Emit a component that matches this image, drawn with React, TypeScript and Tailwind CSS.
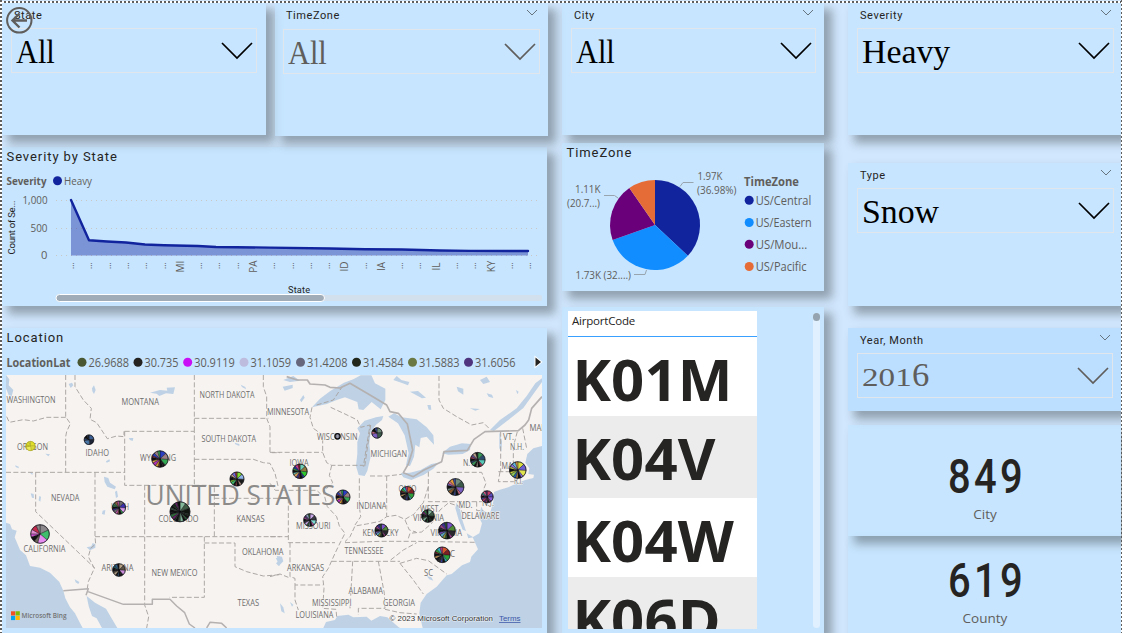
import React from "react";

const DIN = "font-['Roboto','Liberation_Sans',sans-serif]";
const SEGOE = "font-['Open_Sans','Noto_Sans',sans-serif]";
const SERIF = "font-['Liberation_Serif',serif]";
const SHADOW = "shadow-[7px_7px_9px_1px_rgba(75,85,92,0.48)]";
const PANEL = `bg-[rgba(192,228,255,0.62)] ${SHADOW}`;

function Chevron({ className = "" }: { className?: string }) {
  return (
    <svg viewBox="0 0 32 18" className={className} fill="none" stroke="currentColor">
      <path d="M1 1L16 16L31 1" strokeWidth="1.7" />
    </svg>
  );
}

function SmallChevron() {
  return (
    <svg viewBox="0 0 12 8" className="h-2 w-3" fill="none" stroke="#66757f">
      <path d="M1 1L6 6L11 1" strokeWidth="1" />
    </svg>
  );
}

type SlicerProps = {
  title: string;
  size: string;
  pad: string;
  surface?: string;
  arrow?: boolean;
  muted?: boolean;
  children: React.ReactNode;
};

function Slicer({ title, size, pad, surface = PANEL, arrow = true, muted = false, children }: SlicerProps) {
  return (
    <section className={`shrink-0 ${surface} ${size} ${pad}`}>
      <div className="flex h-[18px] justify-between pr-0.5">
        <h2 className={`${DIN} pt-px pl-[3px] text-[11px] leading-[18px] tracking-[0.55px] text-[#252423]`}>{title}</h2>
        <div className="pt-[3px]">{arrow && <SmallChevron />}</div>
      </div>
      <div
        className={`mt-1 flex h-[45px] items-center justify-between border border-[#e0e6ec] pr-[3.5px] pl-[4px] ${muted ? "text-[#605e5c]" : "text-black"}`}
      >
        <div className={`${SERIF} text-[34.5px] leading-[42px] whitespace-nowrap`}>{children}</div>
        <Chevron className="h-[18px] w-8" />
      </div>
    </section>
  );
}

const severity = [
  [71, 200], [89, 240.3], [107, 241.5], [126, 242.5], [145, 244.5], [164, 245.3],
  [198, 246], [216, 247], [270, 247.6], [330, 248.5], [365, 249.2], [402, 249.5],
  [440, 250.5], [470, 250.9], [528, 251],
];
const stateTicks: [number, string][] = [
  [73, "…"], [91, "…"], [110, "…"], [128, "…"], [146, "…"], [165, "…"], [181, "MI"],
  [201, "…"], [219, "…"], [238, "…"], [254, "PA"], [274, "…"], [293, "…"], [311, "…"],
  [329, "…"], [345, "ID"], [366, "…"], [382, "IA"], [402, "…"], [420, "…"], [437, "IL"],
  [457, "…"], [475, "…"], [492, "KY"], [512, "…"], [530, "…"],
];

function SeverityChart() {
  const line = severity.map((p) => p.join(",")).join(" ");
  return (
    <svg viewBox="2 172 545 134" className={`block h-[134px] w-[545px] ${SEGOE}`}>
      <text x="6.5" y="185" fontSize="11.2" fontWeight="700" fill="#605e5c" textLength="40" lengthAdjust="spacingAndGlyphs">Severity</text>
      <circle cx="57.5" cy="180.7" r="4.5" fill="#12239e" />
      <text x="64" y="185" fontSize="11.5" fill="#605e5c" textLength="28" lengthAdjust="spacingAndGlyphs">Heavy</text>
      <g stroke="#c9c8c6" strokeWidth="1" strokeDasharray="1 4">
        <path d="M56 200.5H541M56 228.5H541M56 255.5H541" />
      </g>
      <g fontSize="11.2" fill="#605e5c" textAnchor="end">
        <text x="47.5" y="204" textLength="25" lengthAdjust="spacingAndGlyphs">1,000</text>
        <text x="47.5" y="232" textLength="17" lengthAdjust="spacingAndGlyphs">500</text>
        <text x="47.5" y="259">0</text>
      </g>
      <text transform="translate(14.5 254.5) rotate(-90)" className={DIN} fontSize="9.6" fill="#252423" textLength="54" lengthAdjust="spacing">Count of Se...</text>
      <polygon points={`71,255.5 ${line} 528,255.5`} fill="#12239e" fillOpacity="0.42" />
      <polyline points={line} fill="none" stroke="#12239e" strokeWidth="2.4" strokeLinejoin="round" strokeLinecap="round" />
      {stateTicks.map(([x, label]) =>
        label === "…" ? (
          <text key={x} transform={`translate(${x + 1} 269) rotate(-90)`} fontSize="8.5" fill="#504e4c" textLength="6">…</text>
        ) : (
          <text key={x} transform={`translate(${x + 3} 266.5) rotate(-90)`} fontSize="10" fill="#605e5c" textAnchor="middle">{label}</text>
        ),
      )}
      <text x="288" y="293" className={DIN} fontSize="9.2" fill="#252423" textLength="22" lengthAdjust="spacing">State</text>
      <rect x="56" y="295" width="486" height="6" rx="2" fill="#d2e0ee" />
      <rect x="56" y="294.5" width="268.5" height="7" rx="3.5" fill="#a0adb8" stroke="#fff" strokeWidth="1" />
    </svg>
  );
}

function polar(cx: number, cy: number, r: number, turn: number) {
  const a = turn * Math.PI * 2 - Math.PI / 2;
  return `${(cx + r * Math.cos(a)).toFixed(2)} ${(cy + r * Math.sin(a)).toFixed(2)}`;
}
function wedge(cx: number, cy: number, r: number, from: number, to: number) {
  return `M${cx} ${cy}L${polar(cx, cy, r, from)}A${r} ${r} 0 ${to - from > 0.5 ? 1 : 0} 1 ${polar(cx, cy, r, to)}Z`;
}

function ZoneChart() {
  const legend: [string, string, number, number][] = [
    ["US/Central", "#12239e", 200.3, 55.5],
    ["US/Eastern", "#118dff", 222.5, 56],
    ["US/Mou...", "#6b007b", 244.3, 51.5],
    ["US/Pacific", "#e66c37", 266.5, 51],
  ];
  return (
    <svg viewBox="562 163 262 128" className={`block h-[128px] w-[262px] ${SEGOE}`} fill="#605e5c">
      <path d={wedge(655, 225, 45, 0, 0.3698)} fill="#12239e" />
      <path d={wedge(655, 225, 45, 0.3698, 0.6955)} fill="#118dff" />
      <path d={wedge(655, 225, 45, 0.6955, 0.9035)} fill="#6b007b" />
      <path d={wedge(655, 225, 45, 0.9035, 1)} fill="#e66c37" />
      <g fill="none" stroke="#98a4ae" strokeWidth="1">
        <path d="M680 186.5L683 182.5H693.5M604 195.5H614.5L618 198M634 274.5H645L646.5 270" />
      </g>
      <g fontSize="10.6">
        <text x="697.5" y="180" textLength="25" lengthAdjust="spacingAndGlyphs">1.97K</text>
        <text x="697" y="194" textLength="39.5" lengthAdjust="spacingAndGlyphs">(36.98%)</text>
        <text x="575" y="193" textLength="25.5" lengthAdjust="spacingAndGlyphs">1.11K</text>
        <text x="567" y="207" textLength="33" lengthAdjust="spacingAndGlyphs">(20.7...)</text>
        <text x="575.5" y="279" textLength="55.5" lengthAdjust="spacingAndGlyphs">1.73K (32....)</text>
      </g>
      <text x="744" y="186" fontSize="11.5" fontWeight="700" textLength="55" lengthAdjust="spacingAndGlyphs">TimeZone</text>
      {legend.map(([name, color, y, w]) => (
        <g key={name}>
          <circle cx="749.2" cy={y} r="4.5" fill={color} />
          <text x="755.7" y={y + 4.7} fontSize="12" textLength={w} lengthAdjust="spacingAndGlyphs">{name}</text>
        </g>
      ))}
    </svg>
  );
}

const bubblePalettes: Record<string, string[]> = {
  yellow: ["#e0e02a", "#d8d83c", "#ecea55", "#c8c420"],
  blue: ["#3c5f93", "#1a2233", "#4c78a8", "#27406b"],
  gray: ["#7d7f92"],
  green: ["#83b89a", "#3d5b45", "#101510", "#1b2a1e", "#6b1f6b", "#2e6b3b", "#111111"],
  bright: ["#8b878a", "#3fbf6d", "#e68cf0", "#6e665a", "#8d6a3a", "#d658d6", "#e08ad0", "#c22b4d"],
  mixed: ["#2c3ec0", "#9b7f86", "#34a853", "#1a1a1a", "#40b8cc", "#6b2d1c", "#d39a32", "#b02fb5", "#e3a84a", "#d9a25d", "#7a1f2b"],
  utah: ["#6d6a6e", "#3a2fb0", "#d89ae8", "#33a852", "#3c7a52", "#8d5a3a", "#d658b6"],
  purple: ["#7a52c9", "#4f8a34", "#28282e", "#9b3f8d", "#3a2f90", "#27522d", "#8d9638", "#5aa0b8"],
  lime: ["#7fd92c", "#8fb5e8", "#1a1a1a", "#caa08b", "#7768e8", "#a13838", "#101010", "#3fbf6d"],
  sand: ["#b5a083", "#5c5145", "#c98ad8", "#161616", "#1f5f6b", "#2a5d8a", "#101010"],
  warm: ["#d2562c", "#7c1f25", "#2ea03a", "#33b0bd", "#c3318f", "#4447c0", "#2c2c2c", "#161616", "#d9a25d"],
  pastel: ["#d6dd3c", "#6b5fd0", "#e2e44f", "#8d6fe0", "#63b4d8", "#d89a3f", "#1f5fae", "#8ec85a"],
  slate: ["#6f8c7d", "#3c5a4a", "#7a5fc0", "#d36a8a", "#e39a3a", "#3a4fa0", "#161616", "#8a5a2c"],
  teal: ["#3a9a5a", "#2c4c6b", "#57c8b8", "#c23a5a", "#5a4a8a", "#b8a08a", "#101510"],
  berry: ["#c23a6a", "#5a4ab8", "#8a5ad8", "#9b3f8d", "#2aa08a", "#d65a8a", "#4a2f70"],
  iowa: ["#6fd0b8", "#8d7a3c", "#2ec82e", "#1f3f9a", "#c3318f", "#7c1f25", "#3a2f90", "#d9a25d"],
  missouri: ["#c9a8e8", "#3a3a44", "#7fd8d0", "#d658b6", "#4a2f70", "#8a9ab8", "#2f5f34"],
};

const bubbles: [number, number, number, string][] = [
  [30.5, 446, 4.6, "yellow"], [89, 439.7, 4.8, "blue"], [160, 459, 8.2, "mixed"],
  [237, 479, 7, "lime"], [119, 507.6, 6.6, "utah"], [180, 511.8, 10, "green"],
  [40, 534, 9.3, "bright"], [119, 570, 6.3, "sand"], [377, 433, 5.2, "slate"],
  [337.5, 436.2, 2.6, "gray"], [300, 471.3, 7.2, "iowa"], [343, 497, 7, "mixed"],
  [310, 520, 6.3, "missouri"], [381.5, 530.5, 6.5, "purple"], [407.3, 493.3, 6.8, "warm"],
  [428, 516, 6.3, "green"], [447, 530.6, 8.3, "purple"], [442.3, 554.8, 7.8, "warm"],
  [455.5, 487, 8.4, "slate"], [477.8, 459.7, 7.3, "teal"], [517.8, 470, 8.3, "pastel"],
  [487.2, 496.8, 6, "berry"],
];

function Bubble({ x, y, r, palette }: { x: number; y: number; r: number; palette: string }) {
  const colors = bubblePalettes[palette];
  const n = r < 3 ? 2 : r < 5.5 ? 6 : r > 9.5 ? 20 : palette === "bright" ? 9 : 14;
  const weights = Array.from({ length: n }, (_, i) => (i < 3 ? 2.3 : 0.7 + ((i * 7) % 5) * 0.15));
  const total = weights.reduce((a, b) => a + b, 0);
  let at = 0;
  return (
    <g stroke={palette === "yellow" ? "#a8a51c" : "#0d0d12"} strokeWidth={palette === "gray" ? 0 : 0.4}>
      {weights.map((w, i) => {
        const from = at / total;
        at += w;
        const black = i > 2 && i % 5 === 4 && palette !== "yellow";
        return <path key={i} d={wedge(x, y, r, from, at / total)} fill={black ? "#111111" : colors[i % colors.length]} />;
      })}
      <circle cx={x} cy={y} r={r} fill="none" strokeWidth={palette === "gray" ? 1.3 : 0.6} />
    </g>
  );
}

const mapLabels: [string, number, number, number][] = [
  ["WASHINGTON", 6.5, 403, 49], ["MONTANA", 121.5, 404.5, 37.5], ["NORTH DAKOTA", 199.5, 397.5, 55],
  ["MINNESOTA", 267, 415, 42], ["OREGON", 17, 450, 31], ["IDAHO", 85.5, 455.5, 23.5],
  ["WYOMING", 140, 460.5, 36], ["SOUTH DAKOTA", 201.5, 441.5, 54.5], ["WISCONSIN", 317, 439.5, 40.5],
  ["MICHIGAN", 370.5, 457, 36.5], ["NEVADA", 51, 501, 28.5], ["UTAH", 111, 510, 18],
  ["COLORADO", 158.5, 522, 40], ["KANSAS", 236.5, 522, 28], ["CALIFORNIA", 23.5, 551.5, 42],
  ["ARIZONA", 101.5, 571, 32], ["NEW MEXICO", 151.5, 576, 46], ["OKLAHOMA", 242, 555, 41.5],
  ["TEXAS", 237.5, 606, 21.5], ["IOWA", 289.5, 466, 19], ["INDIANA", 356.5, 509, 30],
  ["OHIO", 398.5, 492, 18], ["MISSOURI", 296, 529, 34.5], ["KENTUCKY", 362.5, 536, 36],
  ["TENNESSEE", 344.5, 553.5, 39], ["ARKANSAS", 287, 571, 37], ["ALABAMA", 348.5, 593.5, 34.5],
  ["MISSISSIPPI", 312, 606, 39.5], ["LOUISIANA", 295.5, 618, 38], ["GEORGIA", 383, 606, 32],
  ["SC", 424, 576, 9], ["NC", 444, 557, 11], ["VIRGINIA", 430.5, 536, 31.5],
  ["WEST", 420, 512, 18.5], ["VIRGINIA", 413, 520.5, 31], ["MD.", 458.5, 508, 14],
  ["DELAWARE", 461.5, 518.5, 38], ["N.Y.", 463, 466, 13], ["N.J.", 482, 505.5, 12],
  ["VT.", 503, 439.5, 11], ["N.H.", 510, 449.5, 14], ["MAINE", 529.5, 430.5, 24],
  ["MA", 501.5, 469, 11], ["R.I.", 514, 483.5, 9],
];

function MapView() {
  return (
    <svg viewBox="6 375 536 253" className={`block h-[253px] w-[536px] ${SEGOE}`}>
      <rect x="6" y="375" width="536" height="253" fill="#f6f3f1" />
      <g transform="translate(0 320) scale(.333333)" fill="none" strokeLinejoin="round">
        <g fill="#bed1e5">
          <path d="M18 608L30 612 36 628 50 632 44 652 60 690 78 706 90 738 120 743 150 758 178 786 190 812 196 835 210 862 225 880 238 905 248 924H18Z" />
          <path d="M260 828L285 848 318 866 332 890 352 924H306L290 895 276 888 266 858Z" />
          <path d="M18 165L28 178 26 196 40 210 34 232 26 225 18 205Z" />
          <path d="M312 470L325 474 330 488 348 500 344 508 322 500 314 486Z" />
          <path d="M450 218L480 210 502 212 500 203 525 202 520 222 498 220 478 228 470 221Z" />
          <path d="M206 192l10 -4 4 8 -8 8zM276 205l6 -9 5 14 -5 12 -5-8zM386 354l14 0 -2 9 -8 -3zM92 520l9 2 1 12 -6-1zM118 528l5 2 -2 15 -5-4zM46 436l10 4 0 5 -9-4zM136 401l14 2 -5 6zM88 456l10 2 -1 7zM308 572l8 -2 -2 14 -8-2zM260 682l14 -3 4 -10 8 4 0 10 -16 8zM224 778l14 8 -3 6 -8-5zM318 424l10-6 2 6 -10 4zM722 194l14 7 2 7 -12-7zM704 368l14 4 0 6 -12-5zM828 715l12-6v30l-5-10z" />
          <path d="M345 515l6-3 3 18 -6 4z" />
        </g>
        <g stroke="#aaa5a2" strokeWidth="2.9" strokeDasharray="15 7">
          <path d="M197 165V290L211 311 200 335 197 350V457M20 290L28 307 70 299 100 303 140 292H197" />
          <path d="M18 457H374M107 457V575L285 745M285 457V650L287 672 272 685 265 710 283 745 265 785 262 805M285 650H840" />
          <path d="M225 165V200L250 240 274 265 270 298 290 308 322 356 350 348 372 350V334" />
          <path d="M374 334H583M374 334V496H583V334M583 165V334M583 295H805M583 418H760L790 428 810 430 825 460 835 502" />
          <path d="M790 165L790 200 800 230V295L810 320V398H840M434 496V855L446 890 440 924M583 496H643V650M643 535H840" />
          <path d="M613 650V832H508M613 669H705V740L740 755 790 768 840 764" />
        </g>
        <path d="M190 812L265 806 258 826M262 814L370 853H457V838H510L530 858 554 878 568 912 585 924M620 924L630 907 665 910 680 924" stroke="#b4b1b0" strokeWidth="4.5" />
      </g>
      <g transform="translate(270 320) scale(.333333)" fill="none" strokeLinejoin="round">
        <g fill="#bed1e5">
          <path d="M816 378L790 385 772 402 766 428 778 445 775 462 792 464 790 474 766 480 744 488 715 502 690 509 672 516 670 545 660 580 640 572 634 560 626 590 636 610 628 640 608 652 624 688 604 710 600 726 576 736 545 762 530 766 500 800 470 822 452 848 448 880 458 924H816Z" />
          <path d="M160 924L168 906 195 900 202 888 235 884 250 892 290 890 304 902 330 888 352 892 386 922 390 924Z" />
          <path d="M126 262L150 236 182 212 222 188 250 178 272 166H304L315 190 346 206V240L332 268 305 246 280 270 266 268 262 246 225 232 200 240 170 252Z" />
          <path d="M262 325L284 302 318 292 340 288 336 300 318 314 302 336 298 372 302 410 292 452 284 468 266 465 258 438 262 402 262 366 270 340Z" />
          <path d="M355 290L372 280 395 292 440 298 470 322 490 346 492 374 470 350 452 354 448 382 436 374 432 410 420 438 408 436 416 400 404 346 384 310Z" />
          <path d="M392 460L420 458 452 450 484 432 506 428 490 446 462 464 424 480 400 472ZM516 400L540 380 576 370 602 372 600 390 578 402 535 404Z" />
          <path d="M660 330L690 300 740 265 770 228 796 190 816 175V186L790 222 760 264 710 304 672 333ZM688 335l8 30 -2 30 -6 -10z" />
          <path d="M38 200l30-6 0 10 -24 8zM90 240l10-15 4 8 -10 14zM40 180l30-12 20 14 -30 4zM380 168l14 12 24 6 -4 10 -20-8 -24-8zM420 215l24-2 24 20 -12 2zM560 200l20 6 0 18 -16-10zM630 180l20-10 10 16 -20 6zM650 220l16 4 4 10 -14-4zM600 265l30 2 -14 5zM472 255l10 0 2 14 -8 0zM738 210l8 5 -4 8z" />
          <path d="M560 548l10 20 8 35 10 30 -10-4 -12-30 -10-35zM590 640l20 12 -15 3zM20 708l16 2 4 14 -14 14 -8-8 8-8zM30 850l10 12 4 18 -10-6zM60 846l10 8 -4 6zM470 768l14 4 6 10 -12-4z" />
        </g>
        <g stroke="#aaa5a2" strokeWidth="2.9" strokeDasharray="15 7">
          <path d="M0 397H158M126 262L120 292 130 325 158 345V397L170 428 185 436H280M0 490L16 511H140L152 522M0 650H55" />
          <path d="M185 436L178 466 188 488 160 515 172 560 200 590 208 618 225 640 212 665 195 700 175 745 158 770 162 805 158 865 198 868 200 890" />
          <path d="M268 475V560L272 590 255 615M350 468V590M300 468H350L395 463M475 455V545H640L655 520 640 510 648 490 635 457H500" />
          <path d="M475 500L460 548 432 582 405 598 378 586 350 590 330 604 290 612 255 618 240 650 225 665M55 535V668H195M60 668V770L75 775V795H158M0 770L30 762 55 772M75 795V840L85 870" />
          <path d="M225 668L330 664 440 664 615 667M185 724H390M248 724L240 865M325 724L343 820 345 865H265V885M345 868L390 878 440 882" />
          <path d="M362 720L400 690 440 668M415 655L420 640 455 636 485 610 510 570 540 545M390 730L440 715 475 722 530 762M390 730L430 780 460 822M405 600L418 630 438 636M540 550L570 560 582 592M620 545V572L640 572" />
          <path d="M140 255L190 240 220 195M182 262L225 282 262 300 272 322 300 315 280 440M302 315L284 440" />
          <path d="M507 168V240L520 265 560 290 605 315 640 308 660 328M692 335V455M742 335L730 380V445M758 325L770 385M685 455H750M690 455L685 485H740L745 460" />
        </g>
        <path d="M50 170L82 180 112 180 120 192 165 195 180 202 210 204 240 190 300 225 350 255 360 275 385 280 412 312 428 390 415 432 400 458 430 470 462 450 515 425 522 395 592 391 612 358 645 335 745 332 765 315 776 300 785 265 816 230" stroke="#b4b1b0" strokeWidth="5" />
      </g>
      <text x="145.5" y="505" fontSize="27" fill="#8c8b8a" textLength="190" lengthAdjust="spacingAndGlyphs">UNITED STATES</text>
      <g fontSize="8.3" fill="#6e6c6b" stroke="#f8f6f4" strokeWidth="1.2" paintOrder="stroke">
        {mapLabels.map(([name, x, y, w]) => (
          <text key={`${name}${y}`} x={x} y={y} textLength={w} lengthAdjust="spacingAndGlyphs">{name}</text>
        ))}
      </g>
      {bubbles.map(([x, y, r, palette]) => (
        <Bubble key={`${x}-${y}`} x={x} y={y} r={r} palette={palette} />
      ))}
      <path d="M11 611.3h4.2v4.2H11z" fill="#f25022" />
      <path d="M15.6 611.3h4.2v4.2h-4.2z" fill="#7fba00" />
      <path d="M11 615.9h4.2v4.2H11z" fill="#00a4ef" />
      <path d="M15.6 615.9h4.2v4.2h-4.2z" fill="#ffb900" />
      <text x="21.5" y="618.3" fontSize="7.5" fontWeight="600" fill="#737373" textLength="45" lengthAdjust="spacingAndGlyphs">Microsoft Bing</text>
      <g className="font-['Liberation_Sans',sans-serif]" fontSize="7.6">
        <text x="389.5" y="621" fill="#333" stroke="#fff" strokeWidth="1.2" strokeOpacity=".6" paintOrder="stroke" textLength="103.5" lengthAdjust="spacingAndGlyphs">© 2023 Microsoft Corporation</text>
        <text x="499" y="621" fill="#3c57a8" textDecoration="underline" textLength="21.5" lengthAdjust="spacingAndGlyphs">Terms</text>
      </g>
    </svg>
  );
}

const latitudes: [string, string, number, number][] = [
  ["26.9688", "#4a5733", 82, 40.5], ["30.735", "#252423", 138, 34], ["30.9119", "#c90ff5", 187.7, 40.5],
  ["31.1059", "#bdbbde", 244, 40.5], ["31.4208", "#66667c", 300.5, 40.5], ["31.4584", "#22281c", 356.5, 40.5],
  ["31.5883", "#6b7a45", 412.5, 40.5], ["31.6056", "#4f3480", 468.5, 40.5],
];

function LatitudeLegend() {
  return (
    <svg viewBox="2 350 545 25" className={`block h-[25px] w-[545px] ${SEGOE}`} fill="#605e5c" fontSize="12.2">
      <text x="6.5" y="367" fontSize="11.8" fontWeight="700" textLength="64" lengthAdjust="spacingAndGlyphs">LocationLat</text>
      {latitudes.map(([name, color, x, w]) => (
        <g key={name}>
          <circle cx={x} cy="362.3" r="4.5" fill={color} />
          <text x={x + 6.5} y="367" textLength={w} lengthAdjust="spacingAndGlyphs">{name}</text>
        </g>
      ))}
      <path d="M535.5 357.5L541 362 535.5 366.5Z" fill="#252423" stroke="#fff" strokeWidth="2" paintOrder="stroke" />
    </svg>
  );
}

function AirportTable() {
  const rows = [
    { code: "K01M", row: "h-[79px] bg-white" },
    { code: "K04V", row: "h-[82px] bg-[#ececec]" },
    { code: "K04W", row: "h-[79px] bg-white" },
    { code: "K06D", row: "h-[82px] bg-[#ececec]" },
  ];
  return (
    <section className={`mt-4 flex h-[326px] justify-between pt-1 pr-1 pl-[6px] ${PANEL}`}>
      <div className="h-[318px] w-[189px] overflow-hidden">
        <div className={`h-[26px] border-b border-[#3aa0ff] bg-white pl-1 text-[11.5px] leading-[20px] tracking-[-0.2px] text-[#252423] ${SEGOE}`}>
          AirportCode
        </div>
        {rows.map((r) => (
          <div key={r.code} className={`${r.row} ${SEGOE} pl-[4.5px] text-[58px] leading-[84px] font-bold tracking-[0.1px] text-[#252423]`}>
            {r.code}
          </div>
        ))}
      </div>
      <div className="mt-0.5 h-[315px] w-[7px] rounded-full bg-[#e0f0ff]">
        <div className="h-2 w-[7px] rounded-full bg-[#94a3af]" />
      </div>
    </section>
  );
}

function Card({ value, label, size }: { value: string; label: string; size: string }) {
  return (
    <section className={`flex flex-col items-center ${PANEL} ${size}`}>
      <div className={`${DIN} scale-x-[0.84] pl-[5px] text-[47.5px] leading-[48px] font-medium tracking-[4px] text-[#252423]`}>{value}</div>
      <div className={`${SEGOE} mt-[4px] pl-px text-[13.5px] leading-[18px] text-[#605e5c]`}>{label}</div>
    </section>
  );
}

const heading = `${DIN} text-[13px] leading-[18px] tracking-[0.92px] text-[#252423]`;

export default function App() {
  const all = <span className="inline-block origin-left scale-x-[0.88]">All</span>;
  return (
    <main className="relative h-[633px] w-[1122px] overflow-hidden bg-[#d1e7fd]">
      <div className="flex h-full items-start pt-[3px] pl-[2px]">
        <div className="w-[546px] shrink-0">
          <div className="flex items-start gap-[9px]">
            <Slicer title="State" arrow={false} size="h-[132px] w-[264px]" pad="pt-[3px] pl-[9px] pr-[9px]">
              {all}
            </Slicer>
            <Slicer title="TimeZone" muted size="h-[133px] w-[273px]" pad="pt-[3px] pl-[8px] pr-[8px] [&>div:last-child]:mt-[5px]">
              {all}
            </Slicer>
          </div>
          <section className={`mt-[11px] h-[159px] w-[545px] ${PANEL}`}>
            <h2 className={`${heading} h-[25px] pt-[1px] pl-[4.5px]`}>Severity by State</h2>
            <SeverityChart />
          </section>
          <section className={`mt-[22px] h-[310px] w-[545px] ${PANEL}`}>
            <h2 className={`${heading} h-[22px] pt-[1px] pl-[4.5px]`}>Location</h2>
            <LatitudeLegend />
            <div className="pl-1">
              <MapView />
            </div>
          </section>
        </div>

        <div className="ml-[14px] w-[262px] shrink-0">
          <Slicer title="City" size="h-[132px] w-[262px]" pad="pt-[3px] pl-[9px] pr-[8px]">
            {all}
          </Slicer>
          <section className={`mt-2 h-[148px] ${PANEL}`}>
            <h2 className={`${heading} h-5 pt-px pl-[4.5px]`}>TimeZone</h2>
            <ZoneChart />
          </section>
          <AirportTable />
        </div>

        <div className="ml-6 w-[273px] shrink-0">
          <Slicer title="Severity" size="h-[132px] w-[273px]" pad="pt-[3px] pl-[9px] pr-[7px]">
            <span className="inline-block origin-left scale-x-[0.98]">Heavy</span>
          </Slicer>
          <div className="h-7" />
          <Slicer title="Type" size="h-[143px] w-[273px]" pad="pt-[3px] pl-[9px] pr-[7px]">
            <span className="inline-block origin-left scale-x-[0.98]">Snow</span>
          </Slicer>
          <div className="h-[22px]" />
          <Slicer title="Year, Month" muted surface={`bg-[#bddfff] ${SHADOW}`} size="h-[83px] w-[273px]" pad="pt-[3px] pl-[9px] pr-[8px]">
            <span className="inline-block origin-left scale-x-[1.3] text-[25.5px]">201</span>
            <span className="ml-[12px] inline-block origin-left scale-x-[1.05] text-[33px]">6</span>
          </Slicer>
          <div className="h-[14px]" />
          <Card value="849" label="City" size="relative z-10 h-[111px] pt-[28px]" />
          <Card value="619" label="County" size="h-[100px] pt-[21px]" />
        </div>
      </div>

      <div className="absolute top-px left-0 h-0.5 w-full bg-[repeating-linear-gradient(90deg,#605e5c_0_2px,#ffffff_2px_4px)]" />
      <div className="absolute top-0 left-0 h-full w-0.5 bg-[repeating-linear-gradient(180deg,#605e5c_0_2px,#ffffff_2px_4px)]" />
      <div className="absolute top-0 right-0 h-full w-px bg-[repeating-linear-gradient(180deg,#605e5c_0_2px,#ffffff_2px_4px)]" />
      <svg viewBox="0 0 28 28" className="absolute top-[6px] left-[5px] h-7 w-7" fill="none" stroke="#605e5c">
        <circle cx="14.3" cy="14.3" r="12.2" strokeWidth="2" />
        <path d="M22 14.5H8M14.5 7.5L7.5 14.5L14.5 21.5" strokeWidth="2.4" />
      </svg>
    </main>
  );
}
